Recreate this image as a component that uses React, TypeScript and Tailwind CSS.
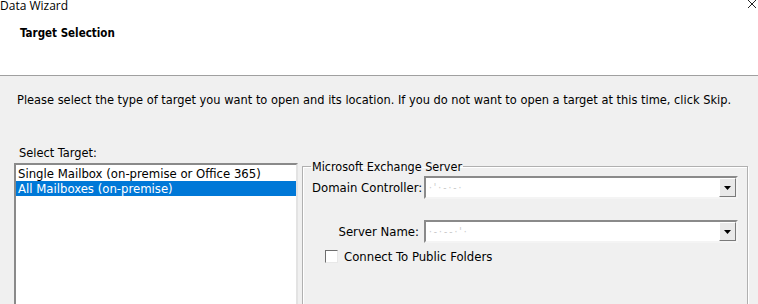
import React from "react";

const F = "font-['DejaVu_Sans_Condensed','DejaVu_Sans',sans-serif]";

function Combo({ text }: { text: string }) {
  return (
    <div className="flex h-[23px] w-[314px] border-2 border-t-[#8a8a8a] border-l-[#8a8a8a] border-r-[#f4f4f4] border-b-[#f4f4f4] bg-white">
      <div className="flex flex-1 items-center pl-[3px] text-[10px] text-[#c9c9c9] tracking-[2px]">{text}</div>
      <div className="flex w-[17px] items-center justify-center border border-t-white border-l-white border-r-[#7a7a7a] border-b-[#7a7a7a] bg-[#e9e9e9]">
        <svg width="7" height="4" viewBox="0 0 7 4">
          <path d="M0 0H7L3.5 4Z" fill="#000" />
        </svg>
      </div>
    </div>
  );
}

export default function App() {
  return (
    <div className={`${F} relative h-[304px] w-[758px] overflow-hidden bg-[#f0f0f0] text-black`}>
      <div className="h-[76px] border-b border-[#a0a0a0] bg-white">
        <div className="flex items-start justify-between">
          <div className="mt-[-1px] font-['Open_Sans',sans-serif] text-[12px] leading-[14px]">Data Wizard</div>
          <svg width="10" height="10" viewBox="0 0 10 10" className="mr-[1px] mt-[-1px]">
            <path d="M1 1L9 9M9 1L1 9" stroke="#222" strokeWidth="1" />
          </svg>
        </div>
        <div className="ml-[20px] mt-[13px] text-[11.5px] font-bold leading-[14px]">Target Selection</div>
      </div>

      <div className="mt-[17px] whitespace-nowrap pl-[17px] text-[12.7px] leading-[14px]">
        Please select the type of target you want to open and its location. If you do not want to open a target at this time, click Skip.
      </div>

      <div className="mt-[39px] pl-[19px] text-[12.7px] leading-[14px]">Select Target:</div>

      <div className="mt-[3px] flex items-start gap-[4px] pl-[14px]">
        <div className="h-[150px] w-[284px] border-2 border-t-[#8a8a8a] border-l-[#8a8a8a] border-r-[#e3e3e3] border-b-[#e3e3e3] bg-white text-[13px] leading-[15px]">
          <div className="h-[16px] pl-[2px] pt-[1px]">Single Mailbox (on-premise or Office 365)</div>
          <div className="h-[15px] bg-[#0078d7] pl-[2px] text-white">All Mailboxes (on-premise)</div>
        </div>

        <fieldset className="mt-[-4px] h-[160px] w-[443px] border border-[#b0b0b0] px-[9px] text-[13px] leading-[15px] shadow-[inset_1px_1px_0_#ffffff,1px_1px_0_#ffffff]">
          <legend className="ml-[-1px] px-[1px] text-[12.5px] leading-[15px]">Microsoft Exchange Server</legend>
          <div className="mt-[2px] flex items-center">
            <div className="w-[107px] whitespace-nowrap text-right">Domain Controller:</div>
            <div className="ml-[5px]"><Combo text="·'·-·-·" /></div>
          </div>
          <div className="mt-[21px] flex items-center">
            <div className="w-[107px] whitespace-nowrap text-right">Server Name:</div>
            <div className="ml-[5px]"><Combo text="·-·--·'·" /></div>
          </div>
          <div className="mt-[6px] flex items-center pl-[13px]">
            <div className="h-[13px] w-[13px] border border-t-[#6e6e6e] border-l-[#6e6e6e] border-r-[#e8e8e8] border-b-[#e8e8e8] bg-white" />
            <div className="ml-[6px]">Connect To Public Folders</div>
          </div>
        </fieldset>
      </div>
    </div>
  );
}
